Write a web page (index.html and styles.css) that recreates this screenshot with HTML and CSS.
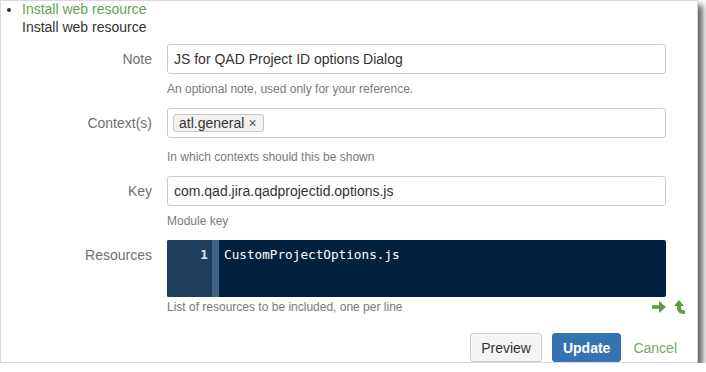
FILE: index.html
```html
<!DOCTYPE html>
<html lang="en">
<head>
  <meta charset="UTF-8" />
  <title>Install web resource</title>
  <link rel="stylesheet" href="styles.css">
</head>
<body>
  <div class="panel">
    <ul class="crumbs">
      <li><a href="#">Install web resource</a></li>
    </ul>
    <div class="title">Install web resource</div>

    <form class="module-form">
      <div class="row">
        <label for="note">Note</label>
        <div class="field">
          <input type="text" id="note" value="JS for QAD Project ID options Dialog" />
          <div class="help">An optional note, used only for your reference.</div>
        </div>
      </div>

      <div class="row">
        <label>Context(s)</label>
        <div class="field">
          <div class="tags">
            <span class="tag">atl.general<span class="x">×</span></span>
          </div>
          <div class="help help-wide">In which contexts should this be shown</div>
        </div>
      </div>

      <div class="row">
        <label for="key">Key</label>
        <div class="field">
          <input type="text" id="key" value="com.qad.jira.qadprojectid.options.js" />
          <div class="help">Module key</div>
        </div>
      </div>

      <div class="row row-res">
        <label>Resources</label>
        <div class="field">
          <div class="editor">
            <div class="gutter">1</div>
            <div class="gutter-edge"></div>
            <div class="code">CustomProjectOptions.js</div>
          </div>
          <div class="help help-tools">
            <span>List of resources to be included, one per line</span>
            <span class="tools">
              <svg width="14" height="12" viewBox="0 0 14 12"><path d="M0 4.2 H7 V0 L14 6 L7 12 V7.8 H0 Z" fill="#5a9f3c"/></svg>
              <svg width="14" height="14" viewBox="0 0 14 14"><path d="M1 6 L6 0 L11 6 H8 V8 Q8 10.5 12 10.5 V14 Q4 14 4 8 V6 Z" fill="#5a9f3c"/></svg>
            </span>
          </div>
        </div>
      </div>

      <div class="actions">
        <button type="button" class="btn">Preview</button>
        <button type="button" class="btn btn-primary">Update</button>
        <a href="#" class="cancel">Cancel</a>
      </div>
    </form>
  </div>
</body>
</html>
```

FILE: styles.css
```css
* {
  box-sizing: border-box;
}

body {
  margin: 0;
  background: #fff;
  font-family: "Liberation Sans", Arial, sans-serif;
  font-size: 14px;
  color: #333;
}

.panel {
  width: 698px;
  height: 363px;
  background: #fff;
  border: 1px solid #d9d9d9;
  box-shadow: 5px 5px 6px rgba(0,0,0,0.6);
}

a {
  color: #6aa24f;
  text-decoration: none;
}

.crumbs {
  margin: 0;
  padding: 0 0 0 21px;
  line-height: 17px;
}

.title {
  padding-left: 21px;
  line-height: 19px;
}

.module-form {
  margin-top: 7px;
}

.row {
  display: grid;
  grid-template-columns: 151px 520px;
  column-gap: 15px;
  margin-bottom: 11px;
}

.row label {
  text-align: right;
  color: #707070;
  line-height: 30px;
}

.field input,
.tags {
  width: 499px;
  height: 30px;
  border: 1px solid #ccc;
  border-radius: 3px;
  padding: 0 6px;
  font-family: inherit;
  font-size: 14px;
  color: #333;
}

.tags {
  display: flex;
  align-items: center;
  padding: 0 5px;
}

.tag {
  background: #f2f2f2;
  border: 1px solid #c8c8c8;
  border-radius: 3px;
  padding: 0 6px 0 5px;
  line-height: 16px;
}

.tag .x {
  margin-left: 4px;
  font-size: 14px;
  color: #555;
}

.help {
  margin-top: 7px;
  font-size: 12px;
  line-height: 16px;
  color: #7a7a7a;
}

.help-wide {
  margin-top: 11px;
}

.editor {
  display: flex;
  width: 499px;
  height: 57px;
  background: #01213f;
  border-radius: 2px;
  overflow: hidden;
  font-family: "DejaVu Sans Mono", monospace;
  font-size: 12.7px;
  line-height: 30px;
  color: #fff;
}

.gutter {
  width: 45px;
  background: #1d3e5d;
  text-align: right;
  padding-right: 4px;
  font-weight: bold;
  color: #dfe6ee;
}

.gutter-edge {
  width: 7px;
  background: #3c6384;
}

.code {
  padding-left: 5px;
}

.help-tools {
  display: flex;
  justify-content: space-between;
  align-items: center;
  margin-top: 2px;
}

.tools {
  display: flex;
  gap: 7px;
  align-items: center;
}

.actions {
  display: flex;
  justify-content: flex-end;
  align-items: center;
  margin-top: 18px;
  padding-right: 20px;
}

.btn {
  height: 29px;
  padding: 0 10px;
  margin-left: 10px;
  border: 1px solid #ccc;
  border-radius: 3px;
  background: #f5f5f5;
  font-family: inherit;
  font-size: 14px;
  color: #333;
}

.btn-primary {
  background: #3572b0;
  border-color: #3572b0;
  color: #fff;
  font-weight: bold;
}

.cancel {
  margin-left: 12px;
  color: #74a85a;
}
```
